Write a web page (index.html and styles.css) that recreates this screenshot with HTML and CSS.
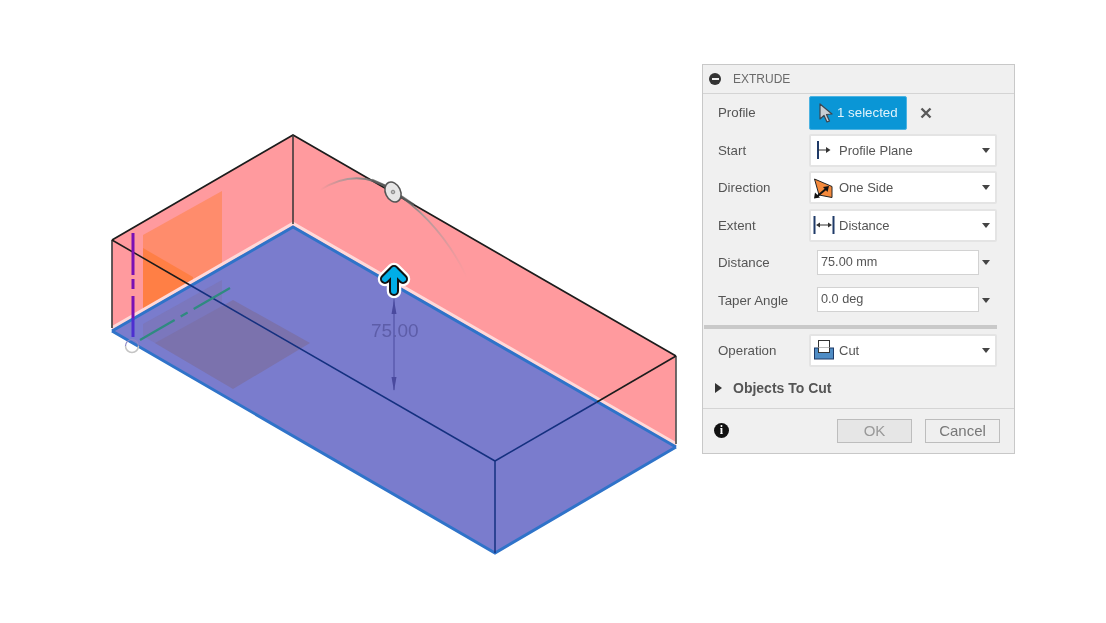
FILE: index.html
```html
<!DOCTYPE html>
<html lang="en">
<head>
  <meta charset="UTF-8" />
  <meta name="viewport" content="width=device-width, initial-scale=1.0"/>
  <title>Extrude</title>
  <link rel="stylesheet" href="styles.css">
</head>
<body>

  <div class="viewport">
    <svg class="model" width="702" height="623" viewBox="0 0 702 623">
      <defs>
        <linearGradient id="arc-fade" gradientUnits="userSpaceOnUse" x1="320" y1="0" x2="467" y2="0">
          <stop offset="0" stop-color="#8a8080" stop-opacity="0"/>
          <stop offset="0.2" stop-color="#999" stop-opacity="0.8"/>
          <stop offset="0.5" stop-color="#444"/>
          <stop offset="0.7" stop-color="#999" stop-opacity="0.8"/>
          <stop offset="1" stop-color="#b09a9a" stop-opacity="0"/>
        </linearGradient>
      </defs>

      <!-- pink walls -->
      <polygon points="112,240 293,135 293,227 112,331" fill="#ff9a9e"/>
      <polygon points="293,135 676,356 676,447 293,227" fill="#ff9a9e"/>

      <!-- origin planes, under the floor -->
      <polygon points="143,235 222,191 222,282 143,328" fill="#ff8c6c"/>
      <polygon points="143,248 193,277 193,298 143,328" fill="#ff7f45"/>

      <!-- floor -->
      <polygon points="112,331 293,227 676,447 495,553" fill="#7a7ccd"/>
      <polygon points="143,324 222,280 222,382 143,336" fill="#7b72ad" opacity="0.5"/>
      <polygon points="155,343 233,300 310,343 233,389" fill="#7b72ad"/>

      <!-- pale rim above the floor -->
      <polyline points="112,328 293,223.500 676,444" fill="none" stroke="#ffd9d9" stroke-width="3.500"/>
      <polyline points="112,331 293,227 676,447" fill="none" stroke="#2f73c9" stroke-width="3"/>
      <polyline points="112,331 495,553 676,447" fill="none" stroke="#2f73c9" stroke-width="3"/>

      <!-- edges -->
      <polyline points="112,240 293,135 676,356" fill="none" stroke="#1c1c1c" stroke-width="1.700"/>
      <line x1="112" y1="240" x2="112" y2="328" stroke="#444" stroke-width="1.700"/>
      <line x1="676" y1="356" x2="676" y2="444" stroke="#555" stroke-width="1.700"/>
      <line x1="293" y1="135" x2="293" y2="224" stroke="#333" stroke-width="1.500"/>
      <line x1="112" y1="240" x2="189" y2="284.500" stroke="#1c1c1c" stroke-width="1.500"/>
      <line x1="189" y1="284.500" x2="495" y2="461" stroke="#14307f" stroke-width="1.500"/>
      <line x1="495" y1="461" x2="495" y2="553" stroke="#14307f" stroke-width="1.500"/>
      <line x1="495" y1="461" x2="597" y2="402" stroke="#14307f" stroke-width="1.500"/>
      <line x1="597" y1="402" x2="676" y2="356" stroke="#1c1c1c" stroke-width="1.500"/>

      <!-- axes -->
      <line x1="133" y1="233" x2="133" y2="318" stroke="#7a10b4" stroke-width="3" stroke-dasharray="42 4 10 7 41"/>
      <line x1="133" y1="318" x2="133" y2="337" stroke="#4d2fd0" stroke-width="3"/>
      <line x1="140" y1="340" x2="230" y2="288" stroke="#2f8a80" stroke-width="2.200" stroke-dasharray="40 7 8 7 60 100"/>
      <path d="M125.500 346 A6.500 6.500 0 0 0 138.500 346" fill="none" stroke="#c4c4c4" stroke-width="1.500"/>
      <path d="M125.500 346 A6.500 6.500 0 0 1 138.500 346" fill="none" stroke="#8c88c4" stroke-width="1.200"/>

      <!-- angle manipulator -->
      <path d="M320 190 Q358 166 393 191 Q440 222 467 277" fill="none" stroke="url(#arc-fade)" stroke-width="1.800"/>
      <path d="M372 180 Q383 184 393 191 Q404 198 414 205" fill="none" stroke="#555" stroke-width="2.600" opacity="0.75"/>
      <ellipse cx="393" cy="192" rx="7.500" ry="10.500" transform="rotate(-25 393 192)" fill="#e6e6e6" stroke="#555" stroke-width="1.500"/>
      <circle cx="393" cy="192" r="1.800" fill="#bbb" stroke="#777" stroke-width="0.800"/>

      <!-- dimension -->
      <line x1="394" y1="270" x2="394" y2="390" stroke="#4a4a9e" stroke-width="1"/>
      <polygon points="394,300 391.500,314 396.500,314" fill="#4a4a9e"/>
      <polygon points="394,391 391.500,377 396.500,377" fill="#4a4a9e"/>
      <text class="dim" x="371" y="337">75.00</text>

      <!-- arrow handle -->
      <g fill="none" stroke-linejoin="round" stroke-linecap="round">
        <path d="M394 291 V270 M385 279 L394 270 L403 279" stroke="#fff" stroke-width="14.500"/>
        <path d="M394 291 V270 M385 279 L394 270 L403 279" stroke="#111" stroke-width="10"/>
        <path d="M394 291 V270 M385 279 L394 270 L403 279" stroke="#00aee8" stroke-width="6"/>
      </g>
    </svg>
  </div>

  <div class="panel">
    <div class="panel-head">
      <span class="collapse"></span>
      <span>EXTRUDE</span>
    </div>

    <div class="panel-body">
      <div class="row">
        <label>Profile</label>
        <button class="selected">
          <svg width="16" height="20" viewBox="0 0 16 20"><path d="M2 1 L2 16 L6 12.500 L9 19 L11.500 18 L8.500 11.500 L14 11 Z" fill="#c9ced3" stroke="#3d4650" stroke-width="1.200" stroke-linejoin="round"/></svg>
          <span>1 selected</span>
        </button>
        <svg class="clear" width="12" height="12" viewBox="0 0 12 12"><path d="M1.500 1.500 L10.500 10.500 M10.500 1.500 L1.500 10.500" stroke="#5a5a5a" stroke-width="2.400"/></svg>
      </div>

      <div class="row">
        <label>Start</label>
        <div class="select">
          <svg class="icon" width="22" height="22" viewBox="0 0 22 22"><path d="M5 2 V20" stroke="#1f3a68" stroke-width="2"/><path d="M5 11 H14" stroke="#333" stroke-width="1"/><path d="M17.500 11 L13 8 V14 Z" fill="#333"/></svg>
          <span class="opt">Profile Plane</span>
          <i class="caret"></i>
        </div>
      </div>

      <div class="row">
        <label>Direction</label>
        <div class="select">
          <svg class="icon" width="22" height="22" viewBox="0 0 22 22"><path d="M1.500 2 L19 9.500 V20.500 L6 18 Z" fill="#f58a3c" stroke="#222" stroke-width="1"/><path d="M14 11 L4 19.500" stroke="#111" stroke-width="2"/><path d="M1 21.500 L2 15.500 L7 20.500 Z" fill="#111"/><path d="M16 9 L10 10 L14.500 15 Z" fill="#111"/></svg>
          <span class="opt">One Side</span>
          <i class="caret"></i>
        </div>
      </div>

      <div class="row">
        <label>Extent</label>
        <div class="select">
          <svg class="icon" width="22" height="22" viewBox="0 0 22 22"><path d="M1.500 2 V20 M20.500 2 V20" stroke="#1f3a68" stroke-width="2"/><path d="M5 11 H17" stroke="#333" stroke-width="1"/><path d="M3 11 L7 8.500 V13.500 Z M19 11 L15 8.500 V13.500 Z" fill="#333"/></svg>
          <span class="opt">Distance</span>
          <i class="caret"></i>
        </div>
      </div>

      <div class="row value-row">
        <label>Distance</label>
        <div class="value">75.00 mm</div>
        <i class="caret"></i>
      </div>

      <div class="row value-row">
        <label>Taper Angle</label>
        <div class="value">0.0 deg</div>
        <i class="caret"></i>
      </div>

      <div class="divider"></div>

      <div class="row">
        <label>Operation</label>
        <div class="select">
          <svg class="icon" width="22" height="22" viewBox="0 0 22 22"><rect x="1.500" y="9" width="19" height="11" fill="#4f8cc4" stroke="#1f3a68"/><rect x="5.500" y="1.500" width="11" height="12" fill="#fff" stroke="#333"/><path d="M5.500 8.500 H16.500" stroke="#bbb"/></svg>
          <span class="opt">Cut</span>
          <i class="caret"></i>
        </div>
      </div>

      <div class="group">
        <i class="tri"></i>
        <span>Objects To Cut</span>
      </div>
    </div>

    <div class="panel-foot">
      <span class="info">i</span>
      <div class="btn disabled">OK</div>
      <div class="btn">Cancel</div>
    </div>
  </div>

</body>
</html>
```

FILE: styles.css
```css
body {
  margin: 0;
  height: 623px;
  display: flex;
  align-items: flex-start;
  background: #fff;
  font-family: "Liberation Sans", Arial, sans-serif;
  overflow: hidden;
}

.viewport {
  width: 702px;
  height: 623px;
  flex: none;
  filter: blur(0.4px);
}

.model {
  display: block;
}

.dim {
  font-family: "Liberation Sans", Arial, sans-serif;
  font-size: 19px;
  fill: #5d5da8;
}

.panel {
  width: 311px;
  margin-top: 64px;
  background: #f0f0f0;
  border: 1px solid #c8c8c8;
  color: #555;
  font-size: 13.300px;
  filter: blur(0.35px);
}

.panel-head {
  height: 28px;
  display: flex;
  align-items: center;
  gap: 12px;
  padding-left: 6px;
  border-bottom: 1px solid #d4d4d4;
  color: #6a6a6a;
  font-size: 12px;
}

.collapse {
  width: 12px;
  height: 12px;
  border-radius: 50%;
  background: #333;
  position: relative;
}

.collapse::after {
  content: "";
  position: absolute;
  left: 2.500px;
  right: 2.500px;
  top: 5px;
  height: 2px;
  background: #f0f0f0;
}

.row {
  height: 37.500px;
  display: flex;
  align-items: center;
  padding-left: 15px;
}

.row label {
  width: 91px;
  flex: none;
}

.selected {
  width: 98px;
  height: 34px;
  display: flex;
  align-items: center;
  gap: 3px;
  padding: 0 0 0 8px;
  background: #0a96d6;
  border: 1px solid #4cb3e2;
  border-radius: 2px;
  color: #e0f3fb;
  font: inherit;
  white-space: nowrap;
}

.clear {
  margin-left: 13px;
}

.select {
  width: 188px;
  height: 33px;
  box-sizing: border-box;
  display: flex;
  align-items: center;
  gap: 4px;
  padding-left: 2px;
  background: #fff;
  border: 2px solid #e4e4e4;
  border-radius: 2px;
  position: relative;
}

.opt {
  font-size: 13px;
}

.select .caret {
  position: absolute;
  right: 5px;
  top: 12px;
}

.caret {
  width: 0;
  height: 0;
  border-left: 4px solid transparent;
  border-right: 4px solid transparent;
  border-top: 5px solid #444;
}

.value-row label {
  width: 99px;
}

.value {
  width: 162px;
  height: 25px;
  margin-bottom: 1px;
  line-height: 22px;
  padding-left: 3px;
  box-sizing: border-box;
  background: #fff;
  border: 1px solid #d2d2d2;
  font-size: 12.700px;
}

.value-row .caret {
  margin-left: 3px;
}

.divider {
  height: 4px;
  margin: 5.500px 17px 3px 1px;
  background: #c9c9c9;
}

.group {
  height: 38.500px;
  display: flex;
  align-items: center;
  gap: 11px;
  padding-left: 12px;
  font-weight: bold;
  font-size: 14px;
}

.tri {
  width: 0;
  height: 0;
  border-top: 5px solid transparent;
  border-bottom: 5px solid transparent;
  border-left: 7px solid #333;
}

.panel-foot {
  height: 44px;
  display: flex;
  align-items: center;
  gap: 13px;
  padding: 0 14px 0 11px;
  border-top: 1px solid #d4d4d4;
}

.info {
  width: 15px;
  height: 15px;
  margin-right: auto;
  border-radius: 50%;
  background: #111;
  color: #fff;
  font: bold 12px/15px "Liberation Serif", serif;
  text-align: center;
}

.btn {
  width: 73px;
  height: 22px;
  line-height: 22px;
  text-align: center;
  border: 1px solid #bdbdbd;
  color: #777;
  font-size: 15px;
  background: #efefef;
}

.btn.disabled {
  background: #e6e6e6;
  color: #999;
}
```
